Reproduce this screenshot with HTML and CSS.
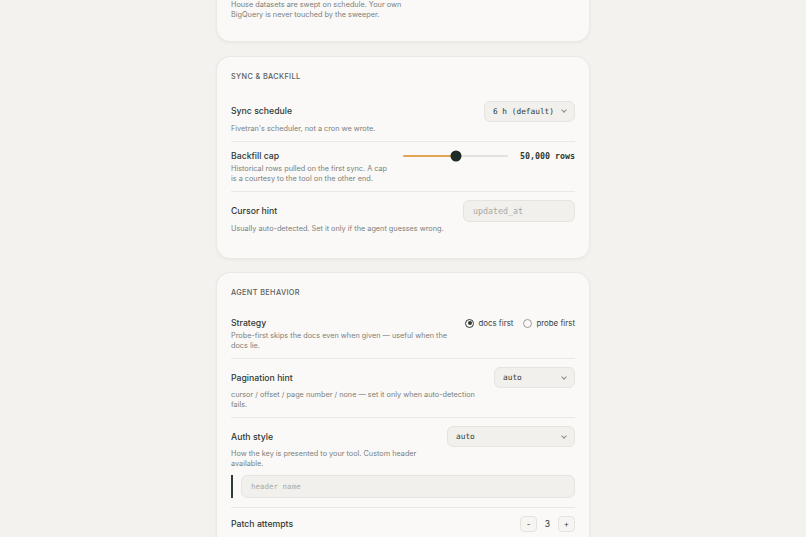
FILE: index.html
```html
<!DOCTYPE html>
<html lang="en">
<head>
  <meta charset="UTF-8">
  <meta name="viewport" content="width=device-width, initial-scale=1.0">
  <title>Connector Settings</title>
  <link rel="stylesheet" href="styles.css">
</head>
<body>
  <main class="page">
    <section class="card card-tail">
      <div class="row">
        <p class="row-desc note">House datasets are swept on schedule. Your own BigQuery is never touched by the sweeper.</p>
      </div>
    </section>

    <section class="card">
      <h2 class="card-title">Sync &amp; Backfill</h2>
      <div class="row">
        <span class="row-label">Sync schedule</span>
        <div class="row-control">
          <button class="select"><span>6 h (default)</span><span class="chev"></span></button>
        </div>
        <p class="row-desc">Fivetran's scheduler, not a cron we wrote.</p>
      </div>
      <div class="row">
        <span class="row-label">Backfill cap</span>
        <div class="row-control slider-wrap">
          <div class="slider">
            <div class="slider-fill" style="width: 50%"></div>
            <div class="slider-thumb" style="left: 50%"></div>
          </div>
          <span class="slider-value">50,000 rows</span>
        </div>
        <p class="row-desc">Historical rows pulled on the first sync. A cap is a courtesy to the tool on the other end.</p>
      </div>
      <div class="row">
        <span class="row-label">Cursor hint</span>
        <div class="row-control">
          <input class="text-input input-cursor" type="text" placeholder="updated_at">
        </div>
        <p class="row-desc">Usually auto-detected. Set it only if the agent guesses wrong.</p>
      </div>
    </section>

    <section class="card">
      <h2 class="card-title">Agent Behavior</h2>
      <div class="row">
        <span class="row-label">Strategy</span>
        <div class="row-control radios">
          <label class="radio checked"><span class="radio-dot"></span>docs first</label>
          <label class="radio"><span class="radio-dot"></span>probe first</label>
        </div>
        <p class="row-desc">Probe-first skips the docs even when given — useful when the docs lie.</p>
      </div>
      <div class="row">
        <span class="row-label">Pagination hint</span>
        <div class="row-control">
          <button class="select select-page"><span>auto</span><span class="chev"></span></button>
        </div>
        <p class="row-desc">cursor / offset / page number / none — set it only when auto-detection fails.</p>
      </div>
      <div class="row">
        <span class="row-label">Auth style</span>
        <div class="row-control">
          <button class="select select-auth"><span>auto</span><span class="chev"></span></button>
        </div>
        <p class="row-desc">How the key is presented to your tool. Custom header available.</p>
        <div class="row-extra">
          <input class="text-input" type="text" placeholder="header name">
        </div>
      </div>
      <div class="row">
        <span class="row-label">Patch attempts</span>
        <div class="row-control stepper">
          <button class="step-btn">-</button>
          <span class="step-value">3</span>
          <button class="step-btn">+</button>
        </div>
      </div>
    </section>
  </main>
</body>
</html>
```

FILE: styles.css
```css
* {
  box-sizing: border-box;
}

body {
  margin: 0;
  background: #f3f2ef;
  font-family: "Inter", "Noto Sans", sans-serif;
  color: #2f3833;
}

.page {
  width: 374px;
  margin: 0 auto;
  display: flex;
  flex-direction: column;
  gap: 13.5px;
  padding-bottom: 40px;
}

.card {
  background: #faf9f7;
  border: 1px solid #ebe9e4;
  border-radius: 14px;
  box-shadow: 0 1px 3px rgba(40, 35, 25, 0.05);
  padding: 15px 14px 16px;
}

/* page is scrolled: only the bottom of this card shows */
.card-tail {
  margin-top: -24px;
  padding-bottom: 14px;
}

.card-title {
  margin: 0 0 11px;
  font-size: 7.3px;
  line-height: 10px;
  font-weight: 500;
  letter-spacing: 0.05em;
  text-transform: uppercase;
  color: #5b605c;
}

.row {
  display: grid;
  grid-template-columns: 1fr auto;
  column-gap: 12px;
  row-gap: 2px;
  padding: 8px 0;
}

.row + .row {
  border-top: 1px solid #ebe9e4;
}

.row-label {
  grid-column: 1;
  grid-row: 1;
  align-self: center;
  font-size: 8.7px;
  line-height: 12px;
  font-weight: 500;
  color: #2f3833;
}

.row-control {
  grid-column: 2;
  grid-row: 1;
  display: flex;
  align-items: center;
  justify-content: flex-end;
}

.row-desc {
  grid-column: 1;
  grid-row: 2;
  margin: 0;
  font-size: 7.3px;
  line-height: 9.5px;
  color: #7b7f7b;
}

.row-desc.note {
  grid-row: 1;
  max-width: 185px;
}

.row-extra {
  grid-column: 1 / 3;
  grid-row: 3;
  margin: 5px 0 1px;
  display: flex;
  border-left: 2px solid #2f3a34;
  padding-left: 8px;
}

/* select */
.select {
  display: flex;
  align-items: center;
  justify-content: space-between;
  gap: 8px;
  height: 21px;
  padding: 0 8px;
  background: #f1f0ec;
  border: 1px solid #e6e4df;
  border-radius: 6px;
  font-family: "DejaVu Sans Mono", monospace;
  font-size: 7.8px;
  color: #2f3833;
}

.select-page {
  width: 81px;
}

.select-auth {
  width: 128px;
}

.chev {
  width: 4px;
  height: 4px;
  border-right: 1px solid #8a8d8a;
  border-bottom: 1px solid #8a8d8a;
  transform: translateY(-1px) rotate(45deg);
}

/* slider */
.slider-wrap {
  gap: 12px;
}

.slider {
  position: relative;
  width: 105px;
  height: 2px;
  background: #e4e2dd;
  border-radius: 2px;
}

.slider-fill {
  height: 100%;
  background: #e0a452;
  border-radius: 2px;
}

.slider-thumb {
  position: absolute;
  top: 50%;
  width: 11px;
  height: 11px;
  border-radius: 50%;
  background: #1f2b26;
  transform: translate(-50%, -50%);
}

.slider-value {
  font-family: "DejaVu Sans Mono", monospace;
  font-size: 8.3px;
  font-weight: 600;
  color: #2c3a33;
}

/* text input */
.text-input {
  width: 100%;
  height: 23px;
  padding: 0 9px;
  background: #f1f0ec;
  border: 1px solid #e6e4df;
  border-radius: 6px;
  font-family: "DejaVu Sans Mono", monospace;
  font-size: 7.5px;
  color: #2f3833;
}

.text-input::placeholder {
  color: #a9aaa6;
}

.input-cursor {
  width: 112px;
  height: 22px;
  font-size: 8.3px;
}

/* radios */
.radios {
  gap: 10px;
}

.radio {
  display: flex;
  align-items: center;
  gap: 4px;
  font-size: 7.9px;
  line-height: 12px;
  color: #3a423d;
}

.radio-dot {
  width: 9px;
  height: 9px;
  border-radius: 50%;
  border: 1px solid #9a9c99;
  display: flex;
  align-items: center;
  justify-content: center;
}

.radio.checked .radio-dot {
  border-color: #2f3833;
}

.radio.checked .radio-dot::after {
  content: '';
  width: 4px;
  height: 4px;
  border-radius: 50%;
  background: #2f3833;
}

/* stepper */
.step-btn {
  width: 17px;
  height: 16px;
  padding: 0;
  background: #f6f5f2;
  border: 1px solid #e6e4df;
  border-radius: 4px;
  font-family: "Inter", sans-serif;
  font-size: 8px;
  color: #3a423d;
}

.step-value {
  width: 21px;
  text-align: center;
  font-size: 8.5px;
  color: #2f3833;
}
```
